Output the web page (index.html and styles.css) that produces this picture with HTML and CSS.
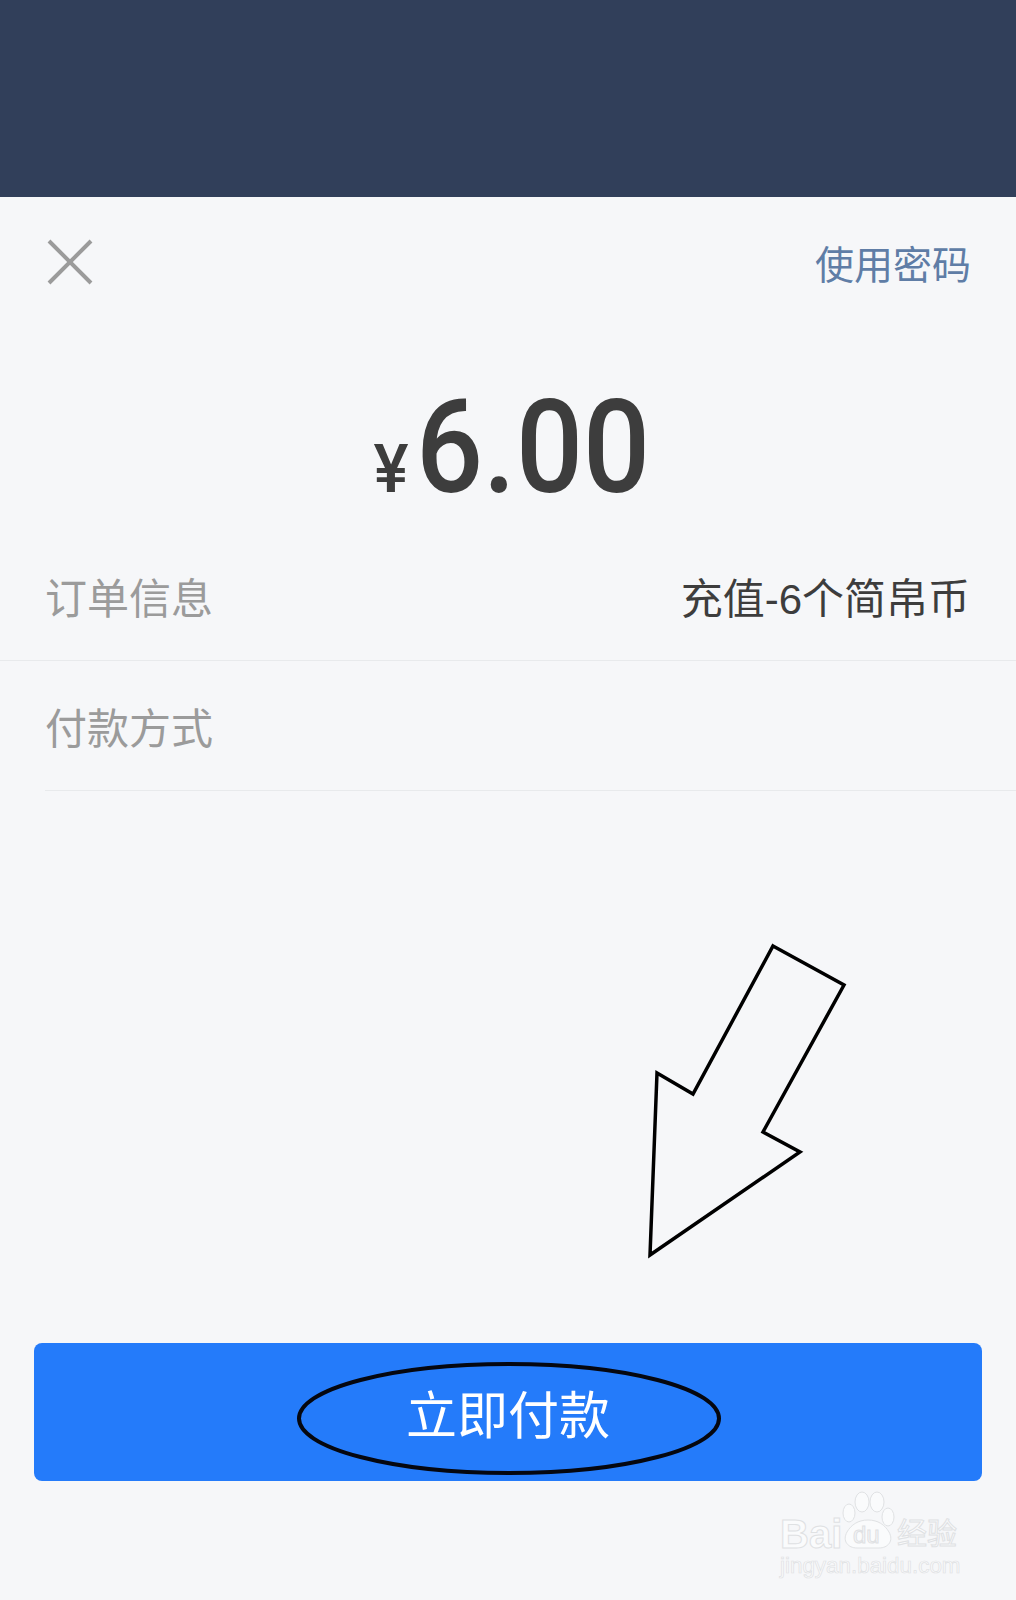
FILE: index.html
```html
<!DOCTYPE html>
<html lang="zh-CN">
<head>
  <meta charset="UTF-8">
  <meta name="viewport" content="width=device-width, initial-scale=1.0">
  <title>立即付款</title>
  <link rel="stylesheet" href="styles.css">
</head>
<body>
  <div class="page">
    <div class="header"></div>

    <div class="topbar">
      <svg class="close" width="46" height="46" viewBox="0 0 46 46">
        <path d="M2 2 L44 44 M44 2 L2 44"></path>
      </svg>
      <span class="use-password">使用密码</span>
    </div>

    <div class="amount">
      <span class="currency">¥</span>
      <span class="price">6.00</span>
    </div>

    <div class="row row-full">
      <span class="row-label">订单信息</span>
      <span class="row-value">充值-6个简帛币</span>
    </div>
    <div class="row row-inset">
      <span class="row-label">付款方式</span>
    </div>

    <div class="spacer"></div>

    <button class="pay-btn">
      <span>立即付款</span>
      <svg class="ring" width="424" height="113" viewBox="0 0 424 113">
        <ellipse cx="212" cy="56.5" rx="210" ry="54.5"></ellipse>
      </svg>
    </button>

    <!-- arrow drawn on top of the screenshot -->
    <svg class="arrow" width="210" height="325" viewBox="640 940 210 325">
      <polygon points="773,946 844,985 763,1132 800,1152 650,1255 657,1073 693,1094"></polygon>
    </svg>

    <div class="watermark">
      <svg class="paw" width="53" height="62" viewBox="0 0 53 62">
        <ellipse cx="20" cy="14" rx="7" ry="10"></ellipse>
        <ellipse cx="35" cy="14" rx="7" ry="10"></ellipse>
        <ellipse cx="7" cy="25" rx="6" ry="9"></ellipse>
        <ellipse cx="46" cy="29" rx="6" ry="9"></ellipse>
        <path d="M26 32 C36 32 43 37 47 44 C52 53 46 60 37 60 C30 60 22 60 15 60 C6 60 0 53 5 44 C9 37 16 32 26 32 Z"></path>
      </svg>
      <span class="wm-bai">Bai</span>
      <span class="wm-du">du</span>
      <span class="wm-jingyan">经验</span>
      <span class="wm-url">jingyan.baidu.com</span>
    </div>
  </div>
</body>
</html>
```

FILE: styles.css
```css
body {
  margin: 0;
  background-color: #f6f7f9;
  font-family: "Liberation Sans", "Noto Sans CJK SC", sans-serif;
}

.page {
  position: relative;
  display: flex;
  flex-direction: column;
  height: 1600px;
  overflow: hidden;
}

.header {
  height: 197px;
  background-color: #313f5a;
}

.topbar {
  display: flex;
  justify-content: space-between;
  align-items: center;
  height: 129px;
  padding: 0 45px 0 47px;
}

.close path {
  fill: none;
  stroke: #9b9b9b;
  stroke-width: 4;
}

.use-password {
  font-size: 39px;
  color: #5f7da6;
}

.amount {
  display: flex;
  justify-content: center;
  align-items: baseline;
  height: 204px;
  padding-left: 5px;
  line-height: 243px;
  color: #3d3d3d;
  gap: 7px;
}

.currency {
  font-family: "Roboto", sans-serif;
  font-size: 66px;
  font-weight: 500;
}

.price {
  display: inline-block;
  width: 232px;
  font-family: "Roboto", sans-serif;
  font-size: 129px;
  font-weight: 500;
  transform: scaleX(0.915);
  transform-origin: left center;
}

.row {
  display: flex;
  justify-content: space-between;
  align-items: center;
  height: 130px;
  font-size: 42px;
  box-sizing: border-box;
}

.row-full {
  height: 131px;
  padding: 0 46px 0 45px;
  border-bottom: 1px solid #e8eaec;
}

.row-inset {
  margin-left: 45px;
  border-bottom: 1px solid #e8eaec;
}

.row-label {
  color: #9b9b9b;
}

.row-value {
  color: #3d3d3d;
}

.spacer {
  flex: 1;
}

.pay-btn {
  position: relative;
  display: flex;
  justify-content: center;
  align-items: center;
  height: 138px;
  margin: 0 34px 119px;
  border: none;
  border-radius: 8px;
  background-color: #247bfa;
  color: #fff;
  font-family: inherit;
  font-size: 51px;
}

.ring {
  position: absolute;
  left: 263px;
  top: 19px;
}

.ring ellipse {
  fill: none;
  stroke: #05070f;
  stroke-width: 4;
}

.arrow {
  position: absolute;
  left: 640px;
  top: 940px;
}

.arrow polygon {
  fill: none;
  stroke: #000;
  stroke-width: 3.5;
}

.watermark {
  position: absolute;
  left: 780px;
  top: 1490px;
  width: 182px;
  height: 90px;
  color: #fafbfc;
  -webkit-text-stroke: 1px #dfe1e3;
}

.paw {
  position: absolute;
  left: 62px;
  top: -2px;
}

.paw ellipse,
.paw path {
  fill: #fafbfc;
  stroke: #e0e2e4;
  stroke-width: 1;
}

.wm-bai,
.wm-du,
.wm-jingyan,
.wm-url {
  position: absolute;
  white-space: nowrap;
}

.wm-bai {
  left: 0;
  top: 24px;
  font-size: 40px;
  line-height: 40px;
  font-weight: 700;
}

.wm-du {
  left: 73px;
  top: 33px;
  font-size: 24px;
  line-height: 24px;
  color: #f6f7f9;
}

.wm-jingyan {
  left: 117px;
  top: 29px;
  font-size: 30px;
  line-height: 30px;
}

.wm-url {
  left: 0;
  top: 64px;
  font-size: 22.4px;
  line-height: 24px;
  -webkit-text-stroke-width: 0.7px;
}
```
